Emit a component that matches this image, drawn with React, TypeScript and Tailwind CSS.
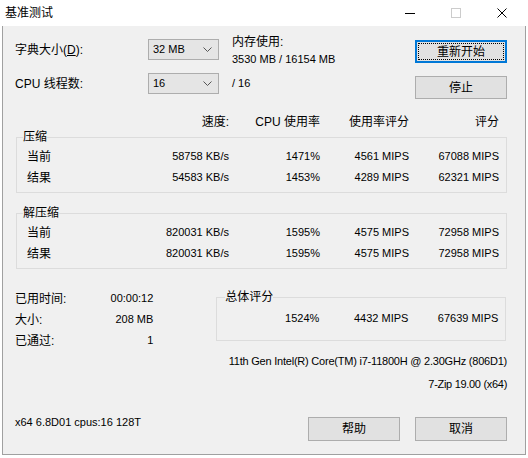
import React from "react";

const font = { fontFamily: '"Liberation Sans", "Noto Sans CJK SC", sans-serif' };

function Combo({ value }: { value: string }) {
  return (
    <div className="flex h-[21px] w-[71px] items-center border border-[#adadad] bg-[#e5e5e5] pl-[4px] pr-[6px] text-[11px]">
      <span className="flex-1">{value}</span>
      <svg width="9" height="5" viewBox="0 0 9 5">
        <polyline points="0.5,0.5 4.5,4.5 8.5,0.5" fill="none" stroke="#555" strokeWidth="1" />
      </svg>
    </div>
  );
}

function Button({ label, focused }: { label: string; focused?: boolean }) {
  return (
    <div
      className={
        "relative flex w-[92px] items-center justify-center bg-[#e1e1e1] text-[12px] " +
        (focused ? "border-2 border-[#0078d7]" : "border border-[#adadad]")
      }
    >
      {focused && <div className="absolute inset-[1px] border border-dotted border-black" />}
      {label}
    </div>
  );
}

// 四列:速度 / CPU 使用率 / 使用率评分 / 评分
function DataRow({ label, speed, cpu, usage, rating }: { label: string; speed: string; cpu: string; usage: string; rating: string }) {
  return (
    <div className="flex h-[21px] items-center pl-[4px]">
      <div className="w-[113px] text-[12px]">{label}</div>
      <div className="w-[89px] text-right text-[11px]">{speed}</div>
      <div className="w-[91px] text-right text-[11px]">{cpu}</div>
      <div className="w-[89px] text-right text-[11px]">{usage}</div>
      <div className="w-[90px] text-right text-[11px]">{rating}</div>
    </div>
  );
}

function Group({ title, rows }: { title: string; rows: string[][] }) {
  return (
    <fieldset className="ml-[1px] w-[491px] border border-[#dcdcdc] pb-[4px] pl-[6px] pt-[1px]">
      <legend className="text-[12px] leading-[16px]">{title}</legend>
      {rows.map((r) => (
        <DataRow key={r[0]} label={r[0]} speed={r[1]} cpu={r[2]} usage={r[3]} rating={r[4]} />
      ))}
    </fieldset>
  );
}

export default function App() {
  return (
    <div className="h-[458px] w-[528px] bg-white text-black" style={font}>
      {/* 标题栏 */}
      <div className="flex h-[26px] items-center bg-white">
        <span className="flex-1 pl-[5px] text-[12px]">基准测试</span>
        <div className="flex h-full w-[46px] items-center justify-center">
          <div className="h-px w-[10px] bg-black" />
        </div>
        <div className="flex h-full w-[46px] items-center justify-center">
          <div className="h-[10px] w-[10px] border border-[#cccccc]" />
        </div>
        <div className="mr-[3px] flex h-full w-[46px] items-center justify-center">
          <svg width="10" height="10" viewBox="0 0 10 10">
            <path d="M0.5 0.5 L9.5 9.5 M9.5 0.5 L0.5 9.5" stroke="#000" strokeWidth="1" />
          </svg>
        </div>
      </div>

      <div className="mx-[2px] flex h-[429px] flex-col border-x border-b border-[#a0a0a0] bg-[#f0f0f0] pl-[12px] pr-[18px]">
        {/* 字典大小 */}
        <div className="mt-[8px] flex h-[39px] items-start">
          <div className="mt-[5px] flex h-[21px] w-[133px] items-center text-[12px]">
            字典大小(<span className="underline">D</span>):
          </div>
          <div className="mt-[5px]">
            <Combo value="32 MB" />
          </div>
          <div className="ml-[13px] leading-[17px]">
            <div className="text-[12px]">内存使用:</div>
            <div className="text-[11px]">3530 MB / 16154 MB</div>
          </div>
          <div className="ml-auto mt-[6px] flex h-[23px]">
            <Button label="重新开始" focused />
          </div>
        </div>

        {/* CPU 线程数 */}
        <div className="flex h-[26px] items-start">
          <div className="flex h-[21px] w-[133px] items-center text-[12px]">CPU 线程数:</div>
          <Combo value="16" />
          <div className="ml-[13px] flex h-[21px] items-center text-[11px]">/ 16</div>
          <div className="ml-auto mt-[3px] flex h-[23px]">
            <Button label="停止" />
          </div>
        </div>

        {/* 表头 */}
        <div className="mt-[15px] flex h-[16px] items-center pl-[12px] text-[12px]">
          <div className="w-[113px]" />
          <div className="w-[89px] text-right">速度:</div>
          <div className="w-[91px] text-right">CPU 使用率</div>
          <div className="w-[89px] text-right">使用率评分</div>
          <div className="w-[90px] text-right">评分</div>
        </div>

        <div className="-mt-[1px]">
          <Group
            title="压缩"
            rows={[
              ["当前", "58758 KB/s", "1471%", "4561 MIPS", "67088 MIPS"],
              ["结果", "54583 KB/s", "1453%", "4289 MIPS", "62321 MIPS"],
            ]}
          />
        </div>
        <div className="mt-[12px]">
          <Group
            title="解压缩"
            rows={[
              ["当前", "820031 KB/s", "1595%", "4575 MIPS", "72958 MIPS"],
              ["结果", "820031 KB/s", "1595%", "4575 MIPS", "72958 MIPS"],
            ]}
          />
        </div>

        {/* 统计与总体评分 */}
        <div className="mt-[19px] flex items-start">
          <div className="w-[139px] text-[12px]">
            <div className="flex h-[21px] items-center justify-between">
              <span>已用时间:</span>
              <span className="text-[11px]">00:00:12</span>
            </div>
            <div className="flex h-[21px] items-center justify-between">
              <span>大小:</span>
              <span className="text-[11px]">208 MB</span>
            </div>
            <div className="flex h-[21px] items-center justify-between">
              <span>已通过:</span>
              <span className="text-[11px]">1</span>
            </div>
          </div>
          <div className="ml-[63px] mt-[1px] flex w-[292px] flex-col">
            <fieldset className="w-[290px] border border-[#dcdcdc] pb-[11px] pl-[8px] pt-[3px]">
              <legend className="text-[12px] leading-[16px]">总体评分</legend>
              <div className="flex h-[21px] items-center text-[11px]">
                <div className="w-[94px] text-right">1524%</div>
                <div className="w-[89px] text-right">4432 MIPS</div>
                <div className="w-[90px] text-right">67639 MIPS</div>
              </div>
            </fieldset>
            <div className="mt-[12px] text-right text-[11px] leading-[16px] tracking-[-0.22px]">
              11th Gen Intel(R) Core(TM) i7-11800H @ 2.30GHz (806D1)
            </div>
            <div className="mt-[7px] text-right text-[11px] leading-[16px] tracking-[-0.3px]">7-Zip 19.00 (x64)</div>
          </div>
        </div>

        {/* 底部 */}
        <div className="mt-[22px] flex items-start">
          <div className="text-[11px] leading-[16px]">x64 6.8D01 cpus:16 128T</div>
          <div className="ml-auto mt-[3px] flex h-[24px] gap-[15px]">
            <Button label="帮助" />
            <Button label="取消" />
          </div>
        </div>
      </div>
    </div>
  );
}
